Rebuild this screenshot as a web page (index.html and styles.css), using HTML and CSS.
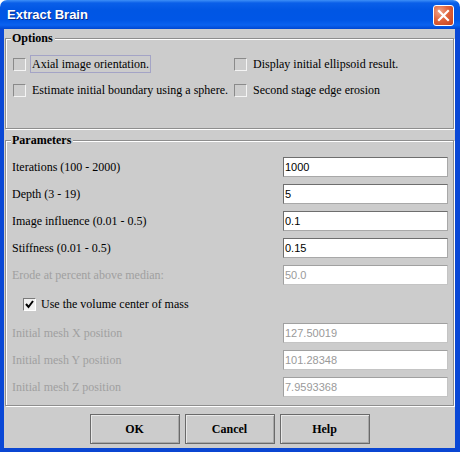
FILE: index.html
```html
<!DOCTYPE html>
<html>
<head>
<meta charset="utf-8">
<link rel="stylesheet" href="styles.css">
</head>
<body>
<div class="window">
  <div class="titlebar">
    <span class="title">Extract Brain</span>
    <span class="close">
      <svg width="21" height="21" viewBox="0 0 21 21">
        <path d="M6 6 L15 15 M15 6 L6 15" stroke="#fff" stroke-width="2.2" stroke-linecap="square"/>
      </svg>
    </span>
  </div>
  <div class="frame">
    <div class="content">
      <div class="group options">
        <div class="group-title">Options</div>
        <div class="opt-grid">
          <div class="check"><span class="box"></span><span class="ctext focus">Axial image orientation.</span></div>
          <div class="check"><span class="box"></span><span class="ctext">Display initial ellipsoid result.</span></div>
          <div class="check"><span class="box"></span><span class="ctext">Estimate initial boundary using a sphere.</span></div>
          <div class="check"><span class="box"></span><span class="ctext">Second stage edge erosion</span></div>
        </div>
      </div>
      <div class="group params">
        <div class="group-title">Parameters</div>
        <div class="rows">
          <div class="row"><span class="lbl">Iterations (100 - 2000)</span><span class="field">1000</span></div>
          <div class="row"><span class="lbl">Depth (3 - 19)</span><span class="field">5</span></div>
          <div class="row"><span class="lbl">Image influence (0.01 - 0.5)</span><span class="field">0.1</span></div>
          <div class="row"><span class="lbl">Stiffness (0.01 - 0.5)</span><span class="field">0.15</span></div>
          <div class="row disabled"><span class="lbl">Erode at percent above median:</span><span class="field">50.0</span></div>
          <div class="check-row">
            <span class="box checked">
              <svg width="11" height="11" viewBox="0 0 11 11"><path d="M2 5 L4.5 8 L9 2" stroke="#000" stroke-width="2" fill="none"/></svg>
            </span>
            <span class="ctext">Use the volume center of mass</span>
          </div>
          <div class="row disabled"><span class="lbl">Initial mesh X position</span><span class="field">127.50019</span></div>
          <div class="row disabled"><span class="lbl">Initial mesh Y position</span><span class="field">101.28348</span></div>
          <div class="row disabled"><span class="lbl">Initial mesh Z position</span><span class="field">7.9593368</span></div>
        </div>
      </div>
      <div class="buttons">
        <span class="btn">OK</span>
        <span class="btn">Cancel</span>
        <span class="btn">Help</span>
      </div>
    </div>
  </div>
</div>
</body>
</html>
```
FILE: styles.css
```css
html, body {
  margin: 0;
  padding: 0;
  background: #ffffff;
}
.window {
  width: 460px;
  height: 452px;
  display: flex;
  flex-direction: column;
  font-family: "Liberation Serif", "Times New Roman", serif;
  font-size: 12px;
  color: #000;
}
.titlebar {
  height: 29px;
  flex: none;
  border-radius: 7px 7px 0 0;
  background: linear-gradient(to bottom, #3d8ff7 0px, #0a5fe8 3px, #0056e4 10px, #0056e6 20px, #0a62f0 25px, #0047d2 29px);
  display: flex;
  align-items: center;
  justify-content: space-between;
  padding: 0 6px 0 7px;
  box-sizing: border-box;
}
.title {
  font-family: "Liberation Sans", Arial, sans-serif;
  font-weight: bold;
  font-size: 13px;
  color: #fff;
  text-shadow: 1px 1px 0 #0a2f8c;
  margin-top: 0px;
}
.close {
  width: 21px;
  height: 21px;
  box-sizing: border-box;
  border: 1px solid #fff;
  border-radius: 3px;
  background: radial-gradient(circle at 30% 30%, #f0a58a 0%, #e0643c 45%, #c5401c 100%);
  display: flex;
  align-items: center;
  justify-content: center;
  margin-top: 1px;
}
.close svg {
  display: block;
  margin: -1px;
}
.frame {
  flex: 1;
  display: flex;
  border-left: 4px solid #0a48d6;
  border-right: 5px solid #0a48d6;
  border-bottom: 4px solid #0a46d2;
  box-shadow: inset 1px 0 0 #0838b8, inset -1px 0 0 #0838b8, inset 0 -1px 0 #0838b8;
  min-height: 0;
}
.content {
  flex: 1;
  background: #cccccc;
  display: flex;
  flex-direction: column;
  padding: 9px 1px 0 1px;
}
.group {
  border: 1px solid #8e8e8e;
  box-shadow: 1px 1px 0 #ffffff, inset 1px 1px 0 #ffffff;
}
.group-title {
  width: fit-content;
  margin: -8px 0 0 5px;
  padding: 0 2px 0 1px;
  background: #cccccc;
  font-weight: bold;
  line-height: 14px;
}
.options {
  height: 91px;
  box-sizing: border-box;
}
.opt-grid {
  display: grid;
  grid-template-columns: 221px 1fr;
  row-gap: 8px;
  padding: 10px 0 0 7px;
}
.check {
  display: flex;
  align-items: center;
  height: 18px;
}
.box {
  width: 13px;
  height: 13px;
  box-sizing: border-box;
  border: 1px solid;
  border-color: #8a8a8a #f4f4f4 #f4f4f4 #8a8a8a;
  background: #cdcdcd;
  flex: none;
  display: flex;
  align-items: center;
  justify-content: center;
}
.box.checked {
  background: #f0f0f0;
  border-color: #7a7a7a #ffffff #ffffff #7a7a7a;
}
.ctext {
  margin-left: 4px;
  padding: 1px 1px 1px 1px;
  border: 1px solid transparent;
  line-height: 14px;
  white-space: nowrap;
}
.focus {
  border-color: #a4a4c6;
}
.params {
  margin-top: 11px;
  height: 266px;
  box-sizing: border-box;
}
.rows {
  display: flex;
  flex-direction: column;
  gap: 7px;
  padding: 10px 5px 0 6px;
}
.row {
  display: flex;
  align-items: center;
  justify-content: space-between;
  height: 20px;
}
.field {
  width: 165px;
  height: 20px;
  box-sizing: border-box;
  background: #fff;
  border: 1px solid;
  border-color: #6e6e6e #a8a8a8 #a8a8a8 #6e6e6e;
  font-family: "Liberation Sans", Arial, sans-serif;
  font-size: 11px;
  line-height: 18px;
  padding-left: 1px;
}
.disabled .lbl {
  color: #a0a0a0;
}
.disabled .field {
  color: #9a9a9a;
  border-color: #a0a0a0 #c4c4c4 #c4c4c4 #a0a0a0;
}
.check-row {
  display: flex;
  align-items: center;
  height: 24px;
  padding-left: 11px;
}
.check-row .ctext {
  margin-left: 3px;
}
.buttons {
  display: flex;
  justify-content: center;
  gap: 5px;
  margin-top: 8px;
}
.btn {
  width: 90px;
  height: 30px;
  box-sizing: border-box;
  border: 1px solid #6a6a6a;
  box-shadow: inset 1px 1px 0 #e8e8e8, inset -1px -1px 0 #a8a8a8;
  font-weight: bold;
  display: flex;
  align-items: center;
  justify-content: center;
  background: #cccccc;
}
```
